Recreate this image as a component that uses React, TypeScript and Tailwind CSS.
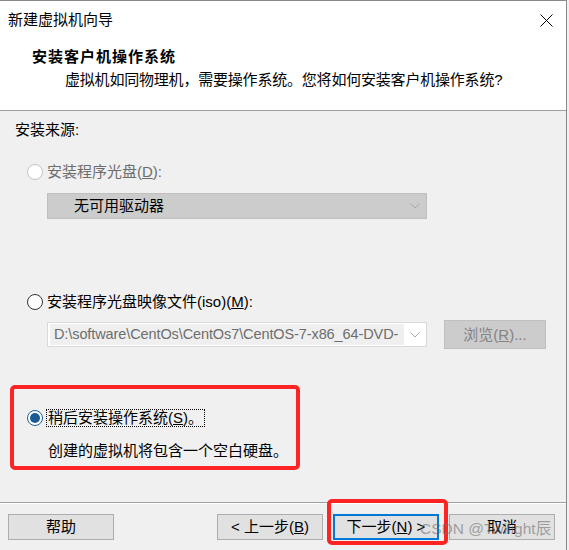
import React from 'react'

const font = "font-['Liberation_Sans','Noto_Sans_CJK_SC',sans-serif]"

function Radio({ state }: { state: 'disabled' | 'off' | 'on' }) {
  if (state === 'on') {
    return (
      <span className="w-[16px] h-[16px] rounded-full border border-[#1a5fa0] bg-white flex items-center justify-center shrink-0">
        <span className="w-[10px] h-[10px] rounded-full bg-[#1c5a96]" />
      </span>
    )
  }
  return (
    <span
      className={`w-[16px] h-[16px] rounded-full border bg-white shrink-0 ${
        state === 'disabled' ? 'border-[#c4c4c4]' : 'border-[#333333]'
      }`}
    />
  )
}

function Chevron({ color }: { color: string }) {
  return (
    <svg width="10" height="6" viewBox="0 0 10 6" className="shrink-0">
      <path d="M0.5 0.5 L5 5 L9.5 0.5" fill="none" stroke={color} strokeWidth="1" />
    </svg>
  )
}

function Button({ children, primary }: { children: React.ReactNode; primary?: boolean }) {
  return (
    <div
      className={`w-[106px] h-[26px] flex items-center justify-center bg-[#e1e1e1] text-black ${
        primary ? 'border-2 border-[#0078d7]' : 'border border-[#adadad]'
      }`}
    >
      {children}
    </div>
  )
}

export default function App() {
  return (
    <div className={`relative w-[569px] h-[550px] bg-[#f0f0f0] text-[15px] leading-[20px] text-black overflow-hidden ${font}`}>
      <div className="w-[567px] h-[550px] border-t border-r border-[#8a8a8a] flex flex-col">
        {/* Header */}
        <div className="h-[110px] bg-white border-b border-[#a0a0a0] shrink-0">
          <div className="h-[38px] flex items-center justify-between pl-[8px] pr-[13px]">
            <span className="text-[15px]">新建虚拟机向导</span>
            <svg width="13" height="13" viewBox="0 0 13 13">
              <path d="M0.5 0.5 L12.5 12.5 M12.5 0.5 L0.5 12.5" stroke="#000" strokeWidth="1" />
            </svg>
          </div>
          <div className="pl-[32px] mt-[8px] font-bold tracking-[1px]">安装客户机操作系统</div>
          <div className="pl-[65px] mt-[3px] tracking-[-0.2px]">虚拟机如同物理机，需要操作系统。您将如何安装客户机操作系统?</div>
        </div>

        {/* Body */}
        <div className="h-[391px] shrink-0 flex flex-col">
          <div className="pl-[15px] mt-[9px]">安装来源:</div>

          <div className="pl-[27px] mt-[22px] h-[20px] flex items-center gap-[4px] text-[#6d6d6d]">
            <Radio state="disabled" />
            <span>
              安装程序光盘(<u>D</u>):
            </span>
          </div>

          <div className="ml-[47px] mt-[11px] w-[380px] h-[26px] bg-[#cccccc] border border-[#bfbfbf] flex items-center justify-between pl-[26px] pr-[6px]">
            <span>无可用驱动器</span>
            <Chevron color="#a8a8a8" />
          </div>

          <div className="pl-[27px] mt-[73px] h-[20px] flex items-center gap-[4px]">
            <Radio state="off" />
            <span>
              安装程序光盘映像文件(iso)(<u>M</u>):
            </span>
          </div>

          <div className="ml-[47px] mt-[8px] h-[29px] flex items-center gap-[17px]">
            <div className="w-[380px] h-[25px] bg-white border border-[#d9d9d9] flex items-center justify-between pl-[2px] pr-[6px]">
              <span className="w-[354px] h-[21px] bg-[#efefef] text-[#6d6d6d] pl-[4px] overflow-hidden whitespace-nowrap leading-[21px] text-[14.5px] tracking-[-0.1px]">
                D:\software\CentOs\CentOs7\CentOS-7-x86_64-DVD-
              </span>
              <Chevron color="#a8a8a8" />
            </div>
            <div className="w-[102px] h-[29px] bg-[#cccccc] border border-[#bfbfbf] flex items-center justify-center text-[#838383]">
              浏览(<u>R</u>)...
            </div>
          </div>

          <div className="pl-[27px] mt-[59px] h-[20px] flex items-center gap-[3px]">
            <Radio state="on" />
            <span className="border border-dotted border-black px-[1px] leading-[16px]">
              稍后安装操作系统(<u>S</u>)。
            </span>
          </div>

          <div className="pl-[48px] mt-[13px]">创建的虚拟机将包含一个空白硬盘。</div>
        </div>

        {/* Footer */}
        <div className="border-t border-[#a0a0a0] flex-1">
          <div className="border-t border-white h-full flex items-start pt-[10px] pl-[8px] pr-[11px]">
            <Button>帮助</Button>
            <div className="ml-auto flex gap-[4px]">
              <Button>&lt; 上一步(<u>B</u>)</Button>
              <div className="ml-[6px]">
                <Button primary>
                  下一步(<u>N</u>) &gt;
                </Button>
              </div>
              <div className="ml-[6px]">
                <Button>取消</Button>
              </div>
            </div>
          </div>
        </div>
      </div>

      {/* annotations */}
      <div className="absolute left-[10px] top-[385px] w-[290px] h-[85px] border-[4px] border-[#ff2424] rounded-[5px]" />
      <div className="absolute left-[327px] top-[499px] w-[121px] h-[46px] border-[4px] border-[#ff2424] rounded-[5px]" />
      <div className="absolute left-[420px] top-[519px] text-[15.5px] leading-[20px] text-[rgba(110,110,110,0.6)] whitespace-nowrap">
        CSDN @Twilight辰
      </div>
    </div>
  )
}
